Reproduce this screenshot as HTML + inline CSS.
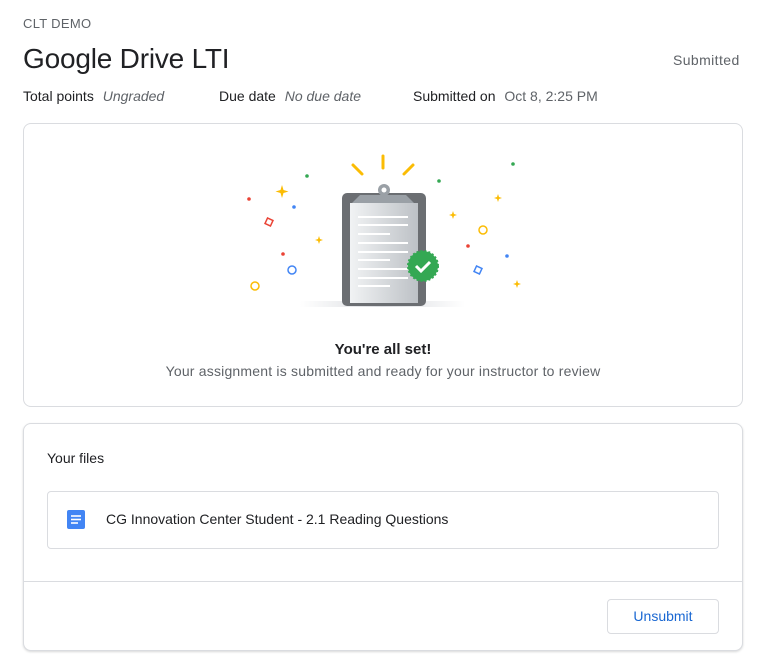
<!DOCTYPE html>
<html><head><meta charset="utf-8"><style>
*{margin:0;padding:0;box-sizing:border-box}
body{width:759px;height:666px;background:#fff;font-family:"Liberation Sans",Arial,sans-serif;color:#202124;position:relative;overflow:hidden}
.a{position:absolute;white-space:nowrap}
.card{position:absolute;left:23px;width:720px;border:1px solid #dadce0;border-radius:8px;background:#fff}
</style></head><body>
<div class="a" style="left:23px;top:16px;font-size:13px;color:#5f6368;letter-spacing:.3px">CLT DEMO</div>
<div class="a" style="left:23px;top:43px;font-size:28px;color:#202124;letter-spacing:-.2px">Google Drive LTI</div>
<div class="a" style="left:673px;top:52px;font-size:14px;color:#5f6368;letter-spacing:.4px">Submitted</div>
<div class="a" style="left:23px;top:88px;font-size:14px">Total points <i style="color:#5f6368;margin-left:5px">Ungraded</i></div>
<div class="a" style="left:219px;top:88px;font-size:14px">Due date <i style="color:#5f6368;margin-left:5px">No due date</i></div>
<div class="a" style="left:413px;top:88px;font-size:14px">Submitted on <span style="color:#5f6368;margin-left:5px">Oct 8, 2:25 PM</span></div>

<div class="card" style="top:123px;height:284px"></div>
<svg class="a" style="left:240px;top:150px" width="290" height="160" viewBox="240 150 290 160">
<defs><linearGradient id="g" x1="0" x2="1"><stop offset="0" stop-color="#f1f3f4"/><stop offset="1" stop-color="#bdc1c6"/></linearGradient>
<linearGradient id="s" x1="0" x2="1"><stop offset="0" stop-color="#fff"/><stop offset=".5" stop-color="#dadce0"/><stop offset="1" stop-color="#fff"/></linearGradient></defs>
<rect x="300" y="301" width="165" height="6" fill="url(#s)"/>
<g stroke="#fbbc04" stroke-width="3" stroke-linecap="round"><line x1="383" y1="156" x2="383" y2="168"/><line x1="353" y1="165" x2="362" y2="174"/><line x1="413" y1="165" x2="404" y2="174"/></g>
<rect x="342" y="193" width="84" height="113" rx="5" fill="#6b6e72"/>
<rect x="350" y="203" width="68" height="100" fill="url(#g)"/>
<path d="M352 203 L360 195 H406 L414 203 Z" fill="#9aa0a6"/>
<circle cx="384" cy="190" r="6" fill="#9aa0a6"/><circle cx="384" cy="190" r="2.5" fill="#fff"/>
<g stroke="#fff" stroke-width="2"><line x1="358" y1="217" x2="408" y2="217"/><line x1="358" y1="225" x2="408" y2="225"/><line x1="358" y1="234" x2="390" y2="234"/><line x1="358" y1="243" x2="408" y2="243"/><line x1="358" y1="252" x2="408" y2="252"/><line x1="358" y1="260" x2="390" y2="260"/><line x1="358" y1="269" x2="408" y2="269"/><line x1="358" y1="278" x2="408" y2="278"/><line x1="358" y1="286" x2="390" y2="286"/></g>
<circle cx="423" cy="266" r="15" fill="#34a853" stroke="#34a853" stroke-width="2" stroke-dasharray="2 2"/>
<path d="M416 266 l5 5 l9 -9" stroke="#fff" stroke-width="3" fill="none"/>
<g fill="#ea4335"><circle cx="249" cy="199" r="1.8"/><circle cx="283" cy="254" r="1.8"/><circle cx="468" cy="246" r="1.8"/></g>
<g fill="#34a853"><circle cx="307" cy="176" r="1.8"/><circle cx="439" cy="181" r="1.8"/><circle cx="513" cy="164" r="1.8"/></g>
<g fill="#4285f4"><circle cx="294" cy="207" r="1.8"/><circle cx="507" cy="256" r="1.8"/></g>
<g fill="none" stroke-width="1.5"><rect x="266" y="219" width="6" height="6" stroke="#ea4335" transform="rotate(25 269 222)"/><rect x="475" y="267" width="6" height="6" stroke="#4285f4" transform="rotate(25 478 270)"/>
<circle cx="292" cy="270" r="4" stroke="#4285f4"/><circle cx="255" cy="286" r="4" stroke="#fbbc04"/><circle cx="483" cy="230" r="4" stroke="#fbbc04"/></g>
<g fill="#fbbc04"><path d="M282 185 l1.5 5 l5 1.5 l-5 1.5 l-1.5 5 l-1.5 -5 l-5 -1.5 l5 -1.5z"/><path d="M319 236 l1 3 l3 1 l-3 1 l-1 3 l-1 -3 l-3 -1 l3 -1z"/><path d="M453 211 l1 3 l3 1 l-3 1 l-1 3 l-1 -3 l-3 -1 l3 -1z"/><path d="M498 194 l1 3 l3 1 l-3 1 l-1 3 l-1 -3 l-3 -1 l3 -1z"/><path d="M517 280 l1 3 l3 1 l-3 1 l-1 3 l-1 -3 l-3 -1 l3 -1z"/></g>
</svg>
<div class="a" style="left:0;width:766px;text-align:center;top:341px;font-size:15px;font-weight:bold;color:#202124">You're all set!</div>
<div class="a" style="left:0;width:766px;text-align:center;top:363px;font-size:14px;color:#5f6368;letter-spacing:.2px">Your assignment is submitted and ready for your instructor to review</div>

<div class="card" style="top:423px;height:228px;box-shadow:0 1px 2px rgba(60,64,67,.2)"></div>
<div class="a" style="left:47px;top:450px;font-size:14px">Your files</div>
<div class="a" style="left:47px;top:491px;width:672px;height:58px;border:1px solid #dadce0;border-radius:4px"></div>
<svg class="a" style="left:67px;top:510px" width="18" height="19" viewBox="0 0 18 19"><rect width="18" height="19" rx="2" fill="#4285f4"/><g stroke="#fff" stroke-width="1.6"><line x1="4" y1="6" x2="14" y2="6"/><line x1="4" y1="9.5" x2="14" y2="9.5"/><line x1="4" y1="13" x2="11" y2="13"/></g></svg>
<div class="a" style="left:106px;top:511px;font-size:14px">CG Innovation Center Student - 2.1 Reading Questions</div>
<div class="a" style="left:24px;top:581px;width:718px;height:1px;background:#dadce0"></div>
<div class="a" style="left:607px;top:599px;width:112px;height:35px;border:1px solid #dadce0;border-radius:4px;color:#1967d2;font-size:14px;text-align:center;line-height:33px">Unsubmit</div>
</body></html>
